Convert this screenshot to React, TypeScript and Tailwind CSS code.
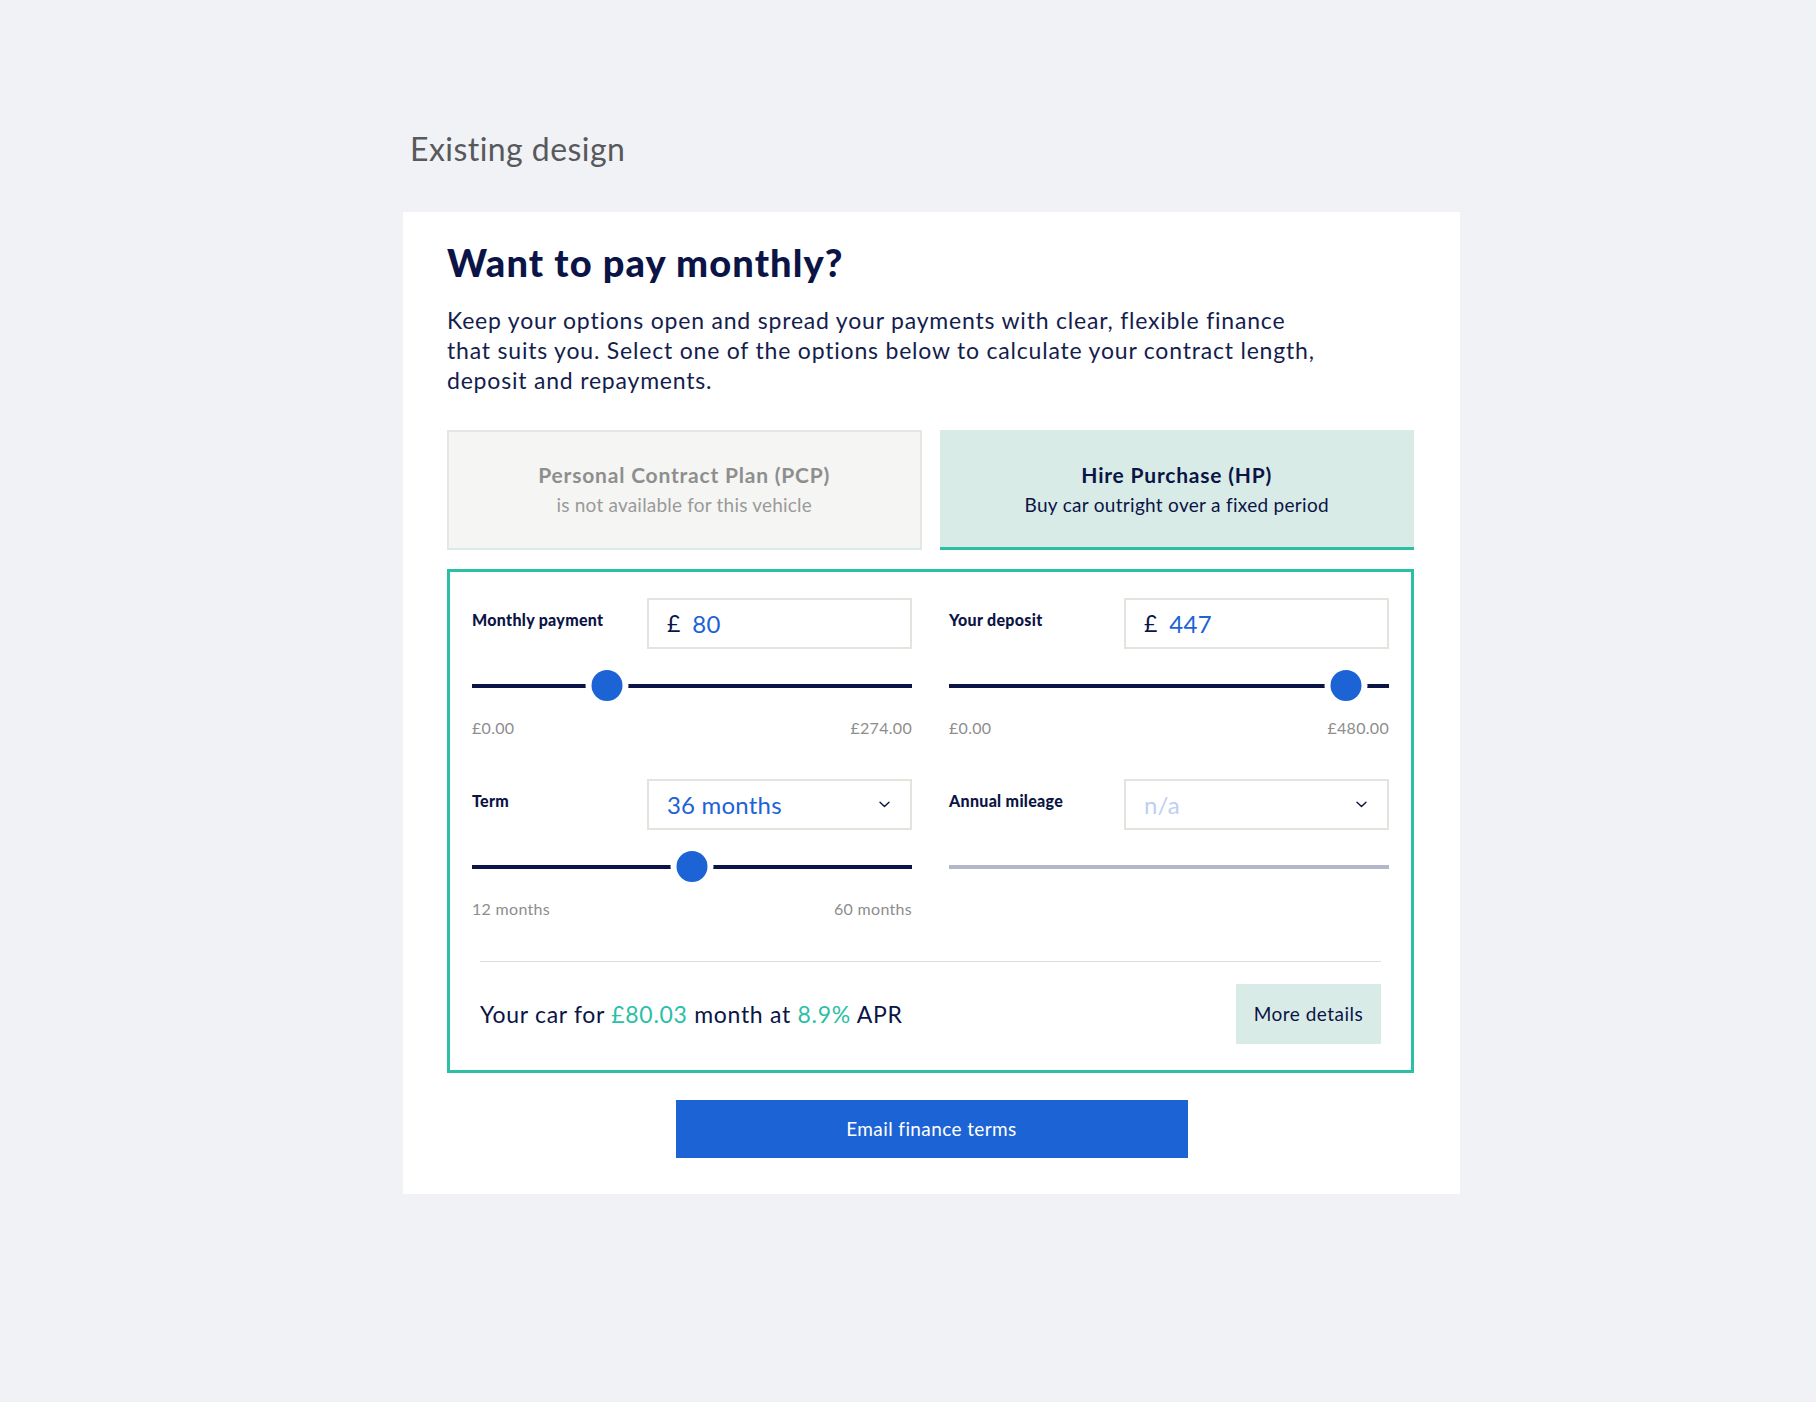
import React from "react";

const NAVY = "#0b1446";

function Chevron() {
  return (
    <svg width="11" height="7" viewBox="0 0 11 7" fill="none">
      <path d="M1 1.2l4.5 4.3L10 1.2" stroke={NAVY} strokeWidth="1.4" strokeLinecap="round" strokeLinejoin="round" />
    </svg>
  );
}

function Slider({ p, disabled = false }: { p: number; disabled?: boolean }) {
  return (
    <div className="relative mt-[17px] h-[40px]">
      <div
        className={
          "absolute left-0 right-0 top-[18px] h-[4px] " +
          (disabled ? "bg-[#b4b6ca]" : "bg-[#0b1446]")
        }
      />
      {!disabled && (
        <div
          className="absolute top-[4px] h-[31px] w-[31px] -translate-x-1/2 rounded-full bg-[#1c63d5] shadow-[0_0_0_6px_#ffffff]"
          style={{ left: `calc(15px + ${p} * (100% - 30px))` }}
        />
      )}
    </div>
  );
}

function Field({
  label,
  kind,
  value,
  p,
  min,
  max,
  disabled = false,
}: {
  label: string;
  kind: "money" | "select";
  value: string;
  p: number;
  min?: string;
  max?: string;
  disabled?: boolean;
}) {
  return (
    <div className="flex flex-col">
      <div className="flex items-start">
        <div className="w-[175px] pt-[12px] text-[16px] font-black leading-[20px] tracking-[0.3px] text-[#0b1446]">
          {label}
        </div>
        <div className="flex h-[51px] flex-1 items-center border-2 border-[#e4e3de] bg-white pl-[18px] pr-[20px]">
          {kind === "money" ? (
            <>
              <span className="text-[23px] leading-none text-[#0b1446]">£</span>
              <span className="ml-[12px] text-[24px] leading-none tracking-[0.3px] text-[#1c63d5]">{value}</span>
            </>
          ) : (
            <>
              <span
                className={
                  "flex-1 text-[24px] leading-none tracking-[0.2px] " +
                  (disabled ? "text-[#bcd0f2]" : "text-[#1c63d5]")
                }
              >
                {value}
              </span>
              <Chevron />
            </>
          )}
        </div>
      </div>
      <Slider p={p} disabled={disabled} />
      <div className="mt-[13px] flex h-[18px] justify-between text-[16px] leading-[18px] tracking-[0.3px] text-[#8d8d8d]">
        <span>{min}</span>
        <span>{max}</span>
      </div>
    </div>
  );
}

export default function App() {
  return (
    <div
      className="min-h-screen bg-[#f0f2f6] pl-[403px] pt-[130px] pb-[207px]"
      style={{ fontFamily: "Lato, 'Noto Sans', sans-serif" }}
    >
      <h2 className="pl-[7px] text-[32px] font-normal leading-[38px] tracking-[0.45px] text-[#58595b]">Existing design</h2>
      <div className="mt-[44px] w-[1057px] bg-white pl-[44px] pr-[46px] pt-[27px] pb-[36px]">
        <h1 className="text-[38px] font-black leading-[46px] tracking-[1.1px] text-[#0b1446]">Want to pay monthly?</h1>
        <p className="mt-[20px] text-[23px] leading-[30px] tracking-[0.8px] text-[#141d4d]">
          Keep your options open and spread your payments with clear, flexible finance
          <br />
          that suits you. Select one of the options below to calculate your contract length,
          <br />
          deposit and repayments.
        </p>

        <div className="mt-[35px] grid grid-cols-2 gap-x-[18px]">
          <div className="flex h-[120px] flex-col items-center justify-center border-2 border-[#e6e6e3] border-b-[#d8ebe5] bg-[#f5f5f4]">
            <div className="text-[21px] font-bold leading-[26px] tracking-[0.8px] text-[#8e8e8e]">Personal Contract Plan (PCP)</div>
            <div className="mt-[4px] text-[19px] leading-[26px] tracking-[0.2px] text-[#9a9a9a]">is not available for this vehicle</div>
          </div>
          <div className="flex h-[120px] flex-col items-center justify-center border-b-[3px] border-[#2bbfa5] bg-[#d9ebe6] pt-[3px]">
            <div className="text-[21px] font-bold leading-[26px] tracking-[0.8px] text-[#0b1446]">Hire Purchase (HP)</div>
            <div className="mt-[4px] text-[19px] leading-[26px] tracking-[0.3px] text-[#0b1446]">Buy car outright over a fixed period</div>
          </div>
        </div>

        <div className="mt-[19px] border-[3px] border-[#2bbfa5] pt-[26px] pb-[26px]">
          <div className="grid grid-cols-2 gap-x-[37px] gap-y-[42px] px-[22px]">
            <Field label="Monthly payment" kind="money" value="80" p={80 / 274} min="£0.00" max="£274.00" />
            <Field label="Your deposit" kind="money" value="447" p={447 / 480} min="£0.00" max="£480.00" />
            <Field label="Term" kind="select" value="36 months" p={0.5} min="12 months" max="60 months" />
            <Field label="Annual mileage" kind="select" value="n/a" p={0} disabled />
          </div>
          <div className="mx-[30px] mt-[43px] h-px bg-[#dcdcdc]" />
          <div className="mx-[30px] mt-[22px] flex items-center justify-between">
            <div className="text-[23px] tracking-[0.7px] text-[#0b1446]">
              Your car for <span className="text-[#2bbfa5]">£80.03</span> month at{" "}
              <span className="text-[#2bbfa5]">8.9%</span> APR
            </div>
            <button className="flex h-[60px] w-[145px] items-center justify-center bg-[#d9ebe6] text-[19px] tracking-[0.5px] text-[#0b1446]">
              More details
            </button>
          </div>
        </div>

        <div className="mt-[27px] flex justify-center pl-[2px]">
          <button className="flex h-[58px] w-[512px] items-center justify-center bg-[#1c63d5] text-[19px] tracking-[0.4px] text-white">
            Email finance terms
          </button>
        </div>
      </div>
    </div>
  );
}
